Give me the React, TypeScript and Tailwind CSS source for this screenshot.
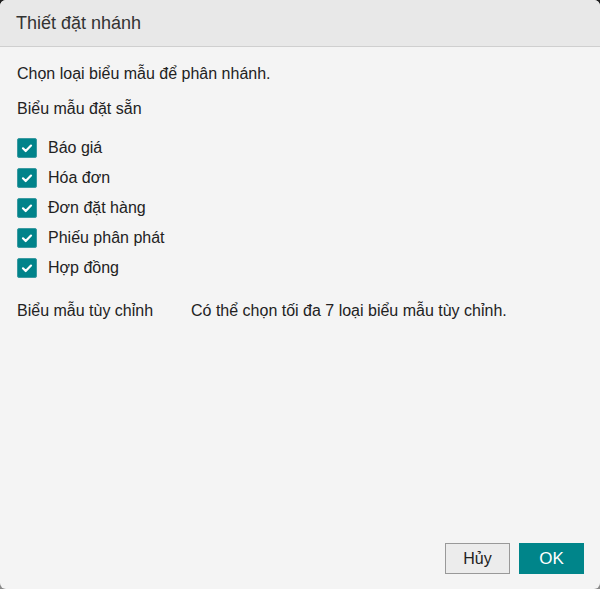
const presets = ["Báo giá", "Hóa đơn", "Đơn đặt hàng", "Phiếu phân phát", "Hợp đồng"];

function CheckBox() {
  return (
    <span className="flex h-5 w-5 items-center justify-center rounded-[2px] border border-[#3a9aa1] bg-[#00838a]">
      <svg width="12" height="12" viewBox="0 0 12 12" fill="none">
        <path d="M2 6.3 4.7 9 10 3.6" stroke="white" strokeWidth="2.2" strokeLinecap="round" strokeLinejoin="round" />
      </svg>
    </span>
  );
}

export default function App() {
  return (
    <div className="h-[589px] w-[600px] bg-gradient-to-b from-[#1e1e1e] to-[#8a8a8a] font-['Liberation_Sans',Arial,sans-serif] text-[16px] text-[#222]">
      <div className="flex h-full flex-col overflow-hidden rounded-[6px] bg-[#f4f4f4]">
        <div className="flex h-[47px] shrink-0 items-center border-b border-[#cfcfcf] bg-[#e8e8e8] px-4 text-[18px] text-[#333]">
          Thiết đặt nhánh
        </div>
        <div className="flex flex-1 flex-col px-[17px] pt-[17px]">
          <p className="leading-[20px]">Chọn loại biểu mẫu để phân nhánh.</p>
          <p className="mt-[15px] leading-[20px]">Biểu mẫu đặt sẵn</p>
          <div className="mt-[19px] flex flex-col gap-[10px]">
            {presets.map((p) => (
              <label key={p} className="flex h-5 items-center gap-[11px]">
                <CheckBox />
                <span className="leading-[20px]">{p}</span>
              </label>
            ))}
          </div>
          <div className="mt-[23px] flex leading-[20px]">
            <span className="w-[174px]">Biểu mẫu tùy chỉnh</span>
            <span>Có thể chọn tối đa 7 loại biểu mẫu tùy chỉnh.</span>
          </div>
        </div>
        <div className="flex justify-end gap-[9px] px-4 pb-[15px]">
          <button className="h-[31px] w-[65px] border border-[#999] bg-[#ececec] text-[16px] text-[#222]">Hủy</button>
          <button className="h-[31px] w-[65px] bg-[#00858a] text-[17px] text-white">OK</button>
        </div>
      </div>
    </div>
  );
}
